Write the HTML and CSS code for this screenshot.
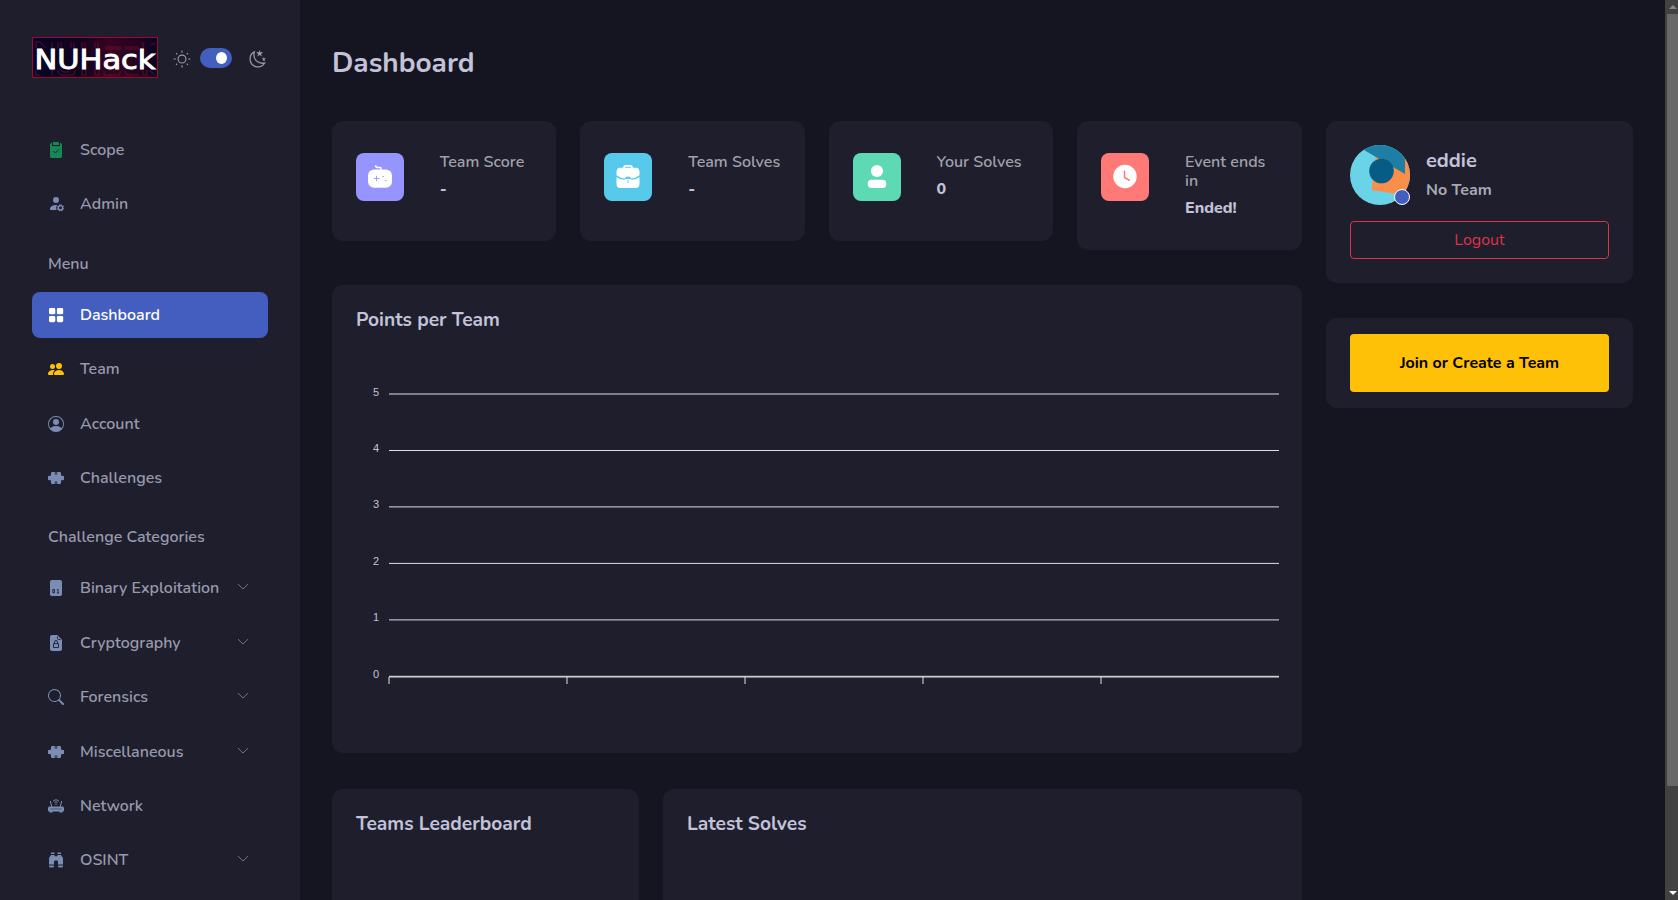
FILE: index.html
```html
<!DOCTYPE html>
<html lang="en">
<head>
<meta charset="utf-8">
<title>Dashboard</title>
<link rel="stylesheet" href="styles.css">
</head>
<body>
<svg width="0" height="0" class="defs" aria-hidden="true">
  <defs>
    <symbol id="puzzle" viewBox="0 0 16 16"><rect x="3" y="2" width="10" height="12" rx="1.200"/><rect y="5.700" width="4" height="4.600" rx="1.300"/><rect x="12" y="5.700" width="4" height="4.600" rx="1.300"/><path d="M2 6.600h12v2.800H2z"/><path fill="none" stroke="#1e1e2d" stroke-width=".9" d="M7.400 1.800v1q-.8.400-.4 1 .3.500 1 .5t1-.5q.4-.6-.4-1v-1M7.400 14.200v-1q-.8-.4-.4-1 .3-.5 1-.5t1 .5q.4.600-.4 1v1"/></symbol>
    <symbol id="chevron" viewBox="0 0 16 16"><path fill="none" stroke="currentColor" stroke-width="1.300" stroke-linecap="round" stroke-linejoin="round" d="M1.700 4.500l6.300 6.300 6.300-6.300"/></symbol>
  </defs>
</svg>
<div class="app">
  <aside class="sidebar">
    <div class="sidebar-head">
      <svg class="logo" width="126" height="41" viewBox="0 0 126 41">
        <defs><linearGradient id="lg"><stop offset="0" stop-color="#060527"/><stop offset=".4" stop-color="#10041f"/><stop offset=".62" stop-color="#370322"/><stop offset=".85" stop-color="#22031f"/><stop offset="1" stop-color="#080524"/></linearGradient></defs>
        <rect x=".5" y=".5" width="125" height="40" fill="url(#lg)" stroke="#9b0930"/>
        <path class="glow" d="M4 11V5h4l6 6M20 11V5M26 11V5M29 11V5M39 11V5M42 11V5M50 11V5M53 11V5M63 11V5M66 11V5M73 10h16M73 12h16M93 10h14M93 12h14M111 11V5M119 8l4-2M4 33v5h4M20 33v5M26 33q0 5 5 5h8q4 0 4-5M29 33q0 2 3 2h5M50 33v5h4v-5M63 33v5h4v-5M72 34v4h16v-4M93 34q0 4 4 4h10M111 33v5h4v-5M118 34l5 4"/>
        <text class="logo-text" x="2.500" y="31.500" textLength="121" lengthAdjust="spacingAndGlyphs">NUHack</text>
      </svg>
      <div class="theme">
        <svg class="sun" width="18" height="18" viewBox="0 0 16 16"><circle cx="8" cy="8" r="3.500"/><path d="M8 .5v2M8 13.500v2M.5 8h2M13.500 8h2M2.700 2.700l1.100 1.100M12.200 12.200l1.100 1.100M13.300 2.700l-1.100 1.100M3.800 12.200l-1.100 1.100"/></svg>
        <span class="switch"><span class="knob"></span></span>
        <svg class="moon" width="17" height="18" viewBox="0 0 16 17"><path d="M5 1.800C-.7 4.400-.2 13.200 5.600 15.500c3.600 1.400 7.500-.1 9.300-3.200C8.200 13.600 3.200 8.400 5 1.800Z"/><path class="star" d="M10 0l.8 2.200H13.300l-1.900 1.500.8 2.500L10 4.700 7.800 6.200l.8-2.500-1.900-1.500h2.500zM14 6.600l.6 1.400H16l-1.200.9.4 1.700-1.200-.9-1.200.9.4-1.700L11.800 8h1.600z"/></svg>
      </div>
    </div>
    <nav class="menu">
      <a class="item"><svg class="ico green" viewBox="0 0 16 16"><path d="M5.500 0h5a.5.5 0 0 1 .5.500c.2 1 0 1.900 0 2.500H5V1A.5.5 0 0 1 5.500 0Z"/><path d="M3.500 1H4v2a1 1 0 0 0 1 1h6a1 1 0 0 0 1-1V1h.5A1.500 1.500 0 0 1 14 2.500v12a1.500 1.500 0 0 1-1.500 1.500h-9A1.500 1.500 0 0 1 2 14.500v-12A1.500 1.500 0 0 1 3.500 1Z"/><path class="cut" d="M4.500 1.300v1.900q0 .4.400.4h6.200q.4 0 .4-.4V1.300M5.500 9l2 2 3.200-3.500"/></svg><span>Scope</span></a>
      <a class="item"><svg class="ico" viewBox="0 0 16 16"><circle cx="8" cy="4" r="3"/><path d="M8.800 14H3c-1 0-1-1-1-1 0-1 1-4 6-4l1.200.1A5 5 0 0 0 8.300 13Z"/><circle class="ring" cx="12.500" cy="11.800" r="2.200" stroke-width="1.400"/><path class="ring" stroke-width="1.100" stroke-dasharray="1.200 1.156" d="M12.500 8.800a3 3 0 1 1-.01 0"/></svg><span>Admin</span></a>
      <div class="section">Menu</div>
      <a class="item active"><svg class="ico" viewBox="0 0 16 16"><rect x="1" y="1" width="6.300" height="6.300" rx="1.400"/><rect x="8.900" y="1" width="6.300" height="6.300" rx="1.400"/><rect x="1" y="8.900" width="6.300" height="6.300" rx="1.400"/><rect x="8.900" y="8.900" width="6.300" height="6.300" rx="1.400"/></svg><span>Dashboard</span></a>
      <a class="item"><svg class="ico yellow" viewBox="0 0 16 16"><circle cx="11" cy="5" r="3"/><circle cx="4.500" cy="5.500" r="2.500"/><path d="M7 14s-1 0-1-1 1-4 5-4 5 3 5 4-1 1-1 1H7ZM5.200 14A2 2 0 0 1 5 13c0-1.400.7-2.700 1.900-3.700A7 7 0 0 0 5 9c-4 0-5 3-5 4s1 1 1 1h4.200Z"/></svg><span>Team</span></a>
      <a class="item"><svg class="ico" viewBox="0 0 16 16"><path d="M11 6a3 3 0 1 1-6 0 3 3 0 0 1 6 0z"/><path fill-rule="evenodd" d="M0 8a8 8 0 1 1 16 0A8 8 0 0 1 0 8zm8-7a7 7 0 0 0-5.468 11.370C3.242 11.226 4.805 10 8 10s4.757 1.225 5.468 2.370A7 7 0 0 0 8 1z"/></svg><span>Account</span></a>
      <a class="item"><svg class="ico"><use href="#puzzle"/></svg><span>Challenges</span></a>
      <div class="section">Challenge Categories</div>
      <a class="item"><svg class="ico" viewBox="0 0 16 16"><rect x="2" width="12" height="16" rx="1.800"/><path class="cut" d="M4.800 9.500h1.700v3.200H4.800zM9 9.800l1-.5v3.600M8.900 12.900h2.200"/></svg><span>Binary Exploitation</span><svg class="chev"><use href="#chevron"/></svg></a>
      <a class="item"><svg class="ico" viewBox="0 0 16 16"><path d="M4 0h5.300L14 4.700V14a2 2 0 0 1-2 2H4a2 2 0 0 1-2-2V2a2 2 0 0 1 2-2Z"/><path class="cut" d="M9.500 1.500V3.500a1 1 0 0 0 1 1h2M6.500 8.500V7a1.500 1.500 0 0 1 3 0v1.500M5.500 8.700h5v3.800h-5z"/></svg><span>Cryptography</span><svg class="chev"><use href="#chevron"/></svg></a>
      <a class="item"><svg class="ico" viewBox="0 0 16 16"><path d="M11.742 10.344a6.500 6.500 0 1 0-1.397 1.398h-.001c.03.040.062.078.098.115l3.850 3.850a1 1 0 0 0 1.415-1.414l-3.850-3.850a1.007 1.007 0 0 0-.115-.1zM12 6.500a5.500 5.500 0 1 1-11 0 5.500 5.500 0 0 1 11 0z"/></svg><span>Forensics</span><svg class="chev"><use href="#chevron"/></svg></a>
      <a class="item"><svg class="ico"><use href="#puzzle"/></svg><span>Miscellaneous</span><svg class="chev"><use href="#chevron"/></svg></a>
      <a class="item"><svg class="ico" viewBox="0 0 16 16"><path class="line" d="M5.200 3a4 4 0 0 1 5.600 0M6.500 4.500a2.200 2.200 0 0 1 3 0M2.400 3L3.700 9M13.600 3L12.300 9"/><circle cx="8" cy="6.200" r=".7"/><rect y="8.500" width="16" height="5" rx="1.500"/><path d="M1.500 13h3v1.500h-3zM11.500 13h3v1.500h-3z"/><path class="cut" stroke-dasharray="1 1" d="M2.500 11h11.500"/></svg><span>Network</span></a>
      <a class="item"><svg class="ico" viewBox="0 0 16 16"><path d="M3 .5h3.500V2H3zM9.500.5H13V2H9.500zM3 3h3.500v1.200h3V3H13l1.700 2.500q.3.500.3 1.200V12.500H10V9.500l-.7-1H6.700l-.7 1v3H1V6.700Q1 6 1.300 5.500zM1 13.500h5V14q0 1.500-1.500 1.500h-2Q1 15.500 1 14zM10 13.500h5V14q0 1.500-1.500 1.500h-2Q10 15.500 10 14z"/></svg><span>OSINT</span><svg class="chev"><use href="#chevron"/></svg></a>
    </nav>
  </aside>

  <main class="main">
    <h1>Dashboard</h1>
    <div class="content">
      <div class="primary">
        <div class="stats">
          <div class="card stat"><span class="badge purple"><svg width="24" height="24" viewBox="0 0 24 24"><path d="M7.500.3q.3 2.200 2.700 2.200h2q.7 0 .8.700v1.600" fill="none" stroke="#fff" stroke-width="1.500"/><rect y="4.500" width="24" height="18.200" rx="6"/><path class="cut" d="M5.800 13.500h5.500M8.550 10.800v5.500M14.500 11.500h1.500M17 15.500h1.500"/></svg></span><div><h6>Team Score</h6><b>-</b></div></div>
          <div class="card stat"><span class="badge blue"><svg width="24" height="24" viewBox="0 0 24 24"><path d="M8 3V2.500Q8 .9 9.700.9h4.600Q16 .9 16 2.500V3" fill="none" stroke="#fff" stroke-width="1.600"/><path d="M4.500 2.800h15Q23.500 2.800 23.500 7v3.200Q19.500 13.300 15 13.600Q14.300 11.400 12 11.400T9 13.600Q4.500 13.300.5 10.200V7Q.5 2.800 4.500 2.800zM.5 12.200Q4.500 14.900 9.300 15Q10 18 12 18t2.700-3Q19.500 14.900 23.500 12.200V18.700Q23.500 22.900 19.500 22.900h-15Q.5 22.900.5 18.700z"/><path d="M8.500 14h7v7h-7z"/><path class="cut" d="M9 14.300Q9.800 12.300 12 12.300T15 14.300M12 15v3"/></svg></span><div><h6>Team Solves</h6><b>-</b></div></div>
          <div class="card stat"><span class="badge teal"><svg width="24" height="24" viewBox="0 0 24 24"><circle cx="12" cy="6" r="6.100"/><rect x="2.700" y="14.800" width="18.600" height="8.200" rx="4.100"/></svg></span><div><h6>Your Solves</h6><b>0</b></div></div>
          <div class="card stat"><span class="badge red"><svg width="24" height="24" viewBox="0 0 24 24"><circle cx="12" cy="11.500" r="11.700"/><path class="cut" d="M11.500 5.500v7l5.300 3"/></svg></span><div><h6>Event ends in</h6><b>Ended!</b></div></div>
        </div>
        <section class="card chart-card">
          <h4>Points per Team</h4>
          <svg class="chart" width="970" height="390" viewBox="332 350 970 390">
            <g class="grid"><path d="M389 394H1279M389 450.500H1279M389 506.900H1279M389 563.400H1279M389 619.900H1279M389 676.300H1279"/><path d="M389 677H1279M389 677v7M567 677v7M745 677v7M923 677v7M1101 677v7"/></g>
            <g class="ticks"><text x="379" y="396">5</text><text x="379" y="452">4</text><text x="379" y="508">3</text><text x="379" y="565">2</text><text x="379" y="621">1</text><text x="379" y="678">0</text></g>
          </svg>
        </section>
        <div class="tables">
          <section class="card"><h4>Teams Leaderboard</h4></section>
          <section class="card"><h4>Latest Solves</h4></section>
        </div>
      </div>
      <div class="secondary">
        <section class="card profile">
          <div class="who">
            <span class="avatar"><svg width="60" height="60" viewBox="0 0 60 60"><defs><clipPath id="av"><circle cx="30" cy="30" r="30"/></clipPath></defs><g clip-path="url(#av)"><path fill="#6bd3e8" d="M0 0h60v60H0z"/><path fill="#f98f4a" d="M26 10L60 13V51L21.500 45z"/><path fill="#1f7ea4" d="M14 5L20-6H55V29z"/><circle cx="31.500" cy="26" r="12.300" fill="#075c86"/></g></svg><i></i></span>
            <div><h5>eddie</h5><p>No Team</p></div>
          </div>
          <button class="logout">Logout</button>
        </section>
        <section class="card join-card"><button class="join">Join or Create a Team</button></section>
      </div>
    </div>
  </main>
  <div class="scrollbar"><span class="arrow up"></span><span class="thumb"></span><span class="arrow down"></span></div>
</div>
</body>
</html>
```

FILE: styles.css
```css
* { box-sizing: border-box; }
body { margin: 0; height: 900px; overflow: hidden; background: #151521; font: 16px/24px Nunito, Lato, "Open Sans", sans-serif; font-weight: 600; color: #9899ac; }
h1, h4, h5, h6, p { margin: 0; }
h1, h4, h5 { color: #c2c2d9; font-weight: 700; }
.defs { position: absolute; }
.app { display: flex; height: 900px; overflow: hidden; }
.sidebar { width: 300px; flex: none; background: #1e1e2d; padding: 37px 32px 0; }
.sidebar-head { display: flex; height: 41px; }
.logo { flex: none; font-family: "DejaVu Sans", sans-serif; }
.logo-text { font-size: 26px; font-weight: 400; fill: #fff; stroke: #fff; stroke-width: .9; }
.glow { fill: none; stroke: #a00b30; stroke-width: 1; opacity: .6; }
.theme { display: flex; align-items: flex-start; padding: 11px 0 0 15px; color: #9899ac; }
.sun { fill: none; stroke: currentColor; margin-top: 2px; }
.switch { width: 32px; height: 20px; margin: 0 17px 0 9px; border-radius: 10px; background: #435ebe; padding: 4px 5px; display: flex; justify-content: flex-end; }
.knob { width: 11px; height: 12px; border-radius: 50%; background: #fff; }
.moon { fill: none; stroke: currentColor; stroke-width: 1.200; margin-top: 2px; }
.moon .star { fill: currentColor; stroke: none; }
.menu { padding-top: 48.800px; }
.item { display: flex; align-items: center; height: 46.400px; margin-bottom: 8px; padding: 0 16px; border-radius: 8px; white-space: nowrap; }
.item.active { background: #435ebe; color: #fff; }
.item span { margin-left: 16px; }
.ico { width: 16px; height: 16px; flex: none; fill: currentColor; color: #7c8db5; }
.active .ico { color: #fff; }
.green { color: #198754; }
.yellow { color: #ffc107; }
.cut { fill: none; stroke: #1e1e2d; stroke-width: .9; }
.line, .ring { fill: none; stroke: currentColor; }
.chev { width: 12px; height: 12px; margin: -2px 3px 0 auto; color: #777884; }
.chev use { width: 12px; height: 12px; }
.section { height: 24px; margin: 24px 0 16px; padding: 0 16px; }
.main { flex: 1; min-width: 0; padding: 46px 32px 0; }
h1 { font-size: 28px; line-height: 34px; margin-bottom: 41px; }
.content { display: flex; gap: 24px; }
.primary { width: 970px; flex: none; }
.secondary { width: 307px; flex: none; }
.card { background: #1e1e2d; border-radius: 11.200px; }
.stats { display: grid; grid-template-columns: repeat(4, 224.450px); gap: 24px; align-items: start; height: 164px; }
.stat { display: flex; min-height: 120px; padding: 32px 16px 31px 24px; }
.stat > div { flex: none; width: 96px; }
.badge { width: 48px; height: 48px; flex: none; display: flex; align-items: center; justify-content: center; border-radius: 8px; margin-right: 35.700px; }
.badge svg { fill: #fff; overflow: visible; }
.purple { background: #9694ff; }
.blue { background: #57caeb; }
.teal { background: #5ddab4; }
.red { background: #ff7976; }
.purple .cut { stroke: #9694ff; }
.blue .cut { stroke: #57caeb; }
.red .cut { stroke: #ff7976; stroke-width: 1.500; }
h6 { font-size: 16px; line-height: 19.200px; font-weight: 600; color: #a1a1ab; margin-bottom: 8px; }
.stat b { display: block; line-height: 19.200px; font-weight: 800; color: #c2c2d9; }
h4 { font-size: 19.200px; line-height: 23px; }
.chart-card { height: 468px; padding-top: 24px; }
.chart-card h4, .tables h4 { padding-left: 24px; }
.chart { display: block; margin-top: 18px; }
.grid { fill: none; stroke: #e0e0e0; }
.ticks { font: 11px "Liberation Sans", Arial, sans-serif; fill: #c2c2d9; text-anchor: end; }
.tables { display: grid; grid-template-columns: 307px 639px; gap: 24px; margin-top: 36px; }
.tables .card { height: 240px; padding-top: 24px; }
.profile { height: 162px; padding: 24px; }
.who { display: flex; height: 60px; }
.avatar { position: relative; width: 60px; height: 60px; margin-right: 16px; }
.avatar i { position: absolute; right: 0; bottom: 0; width: 16px; height: 16px; border: 1px solid #fff; border-radius: 50%; background: #435ebe; }
h5 { font-size: 20px; line-height: 24px; padding-top: 4px; }
.who p { font-weight: 700; line-height: 19px; margin-top: 8px; color: #a9a9b4; }
button { display: block; width: 259px; font: inherit; padding: 0; border-radius: 4px; }
.logout { height: 38px; margin-top: 16px; border: 1px solid #dc3545; background: none; color: #dc3545; font-weight: 400; }
.join-card { height: 90px; margin-top: 35px; padding: 16px 24px; }
.join { height: 58px; border: 0; background: #ffc107; color: #000; font-weight: 700; }
.scrollbar { width: 13px; flex: none; background: #424242; display: flex; flex-direction: column; align-items: flex-end; }
.thumb { width: 11px; height: 772px; background: #686868; }
.arrow { width: 11px; height: 14px; display: flex; justify-content: center; align-items: center; }
.arrow::after { content: ""; border: 4px solid transparent; }
.up::after { border-bottom-color: #888; border-top: 0; }
.down { margin-top: auto; }
.down::after { border-top-color: #fff; border-bottom: 0; }
```
